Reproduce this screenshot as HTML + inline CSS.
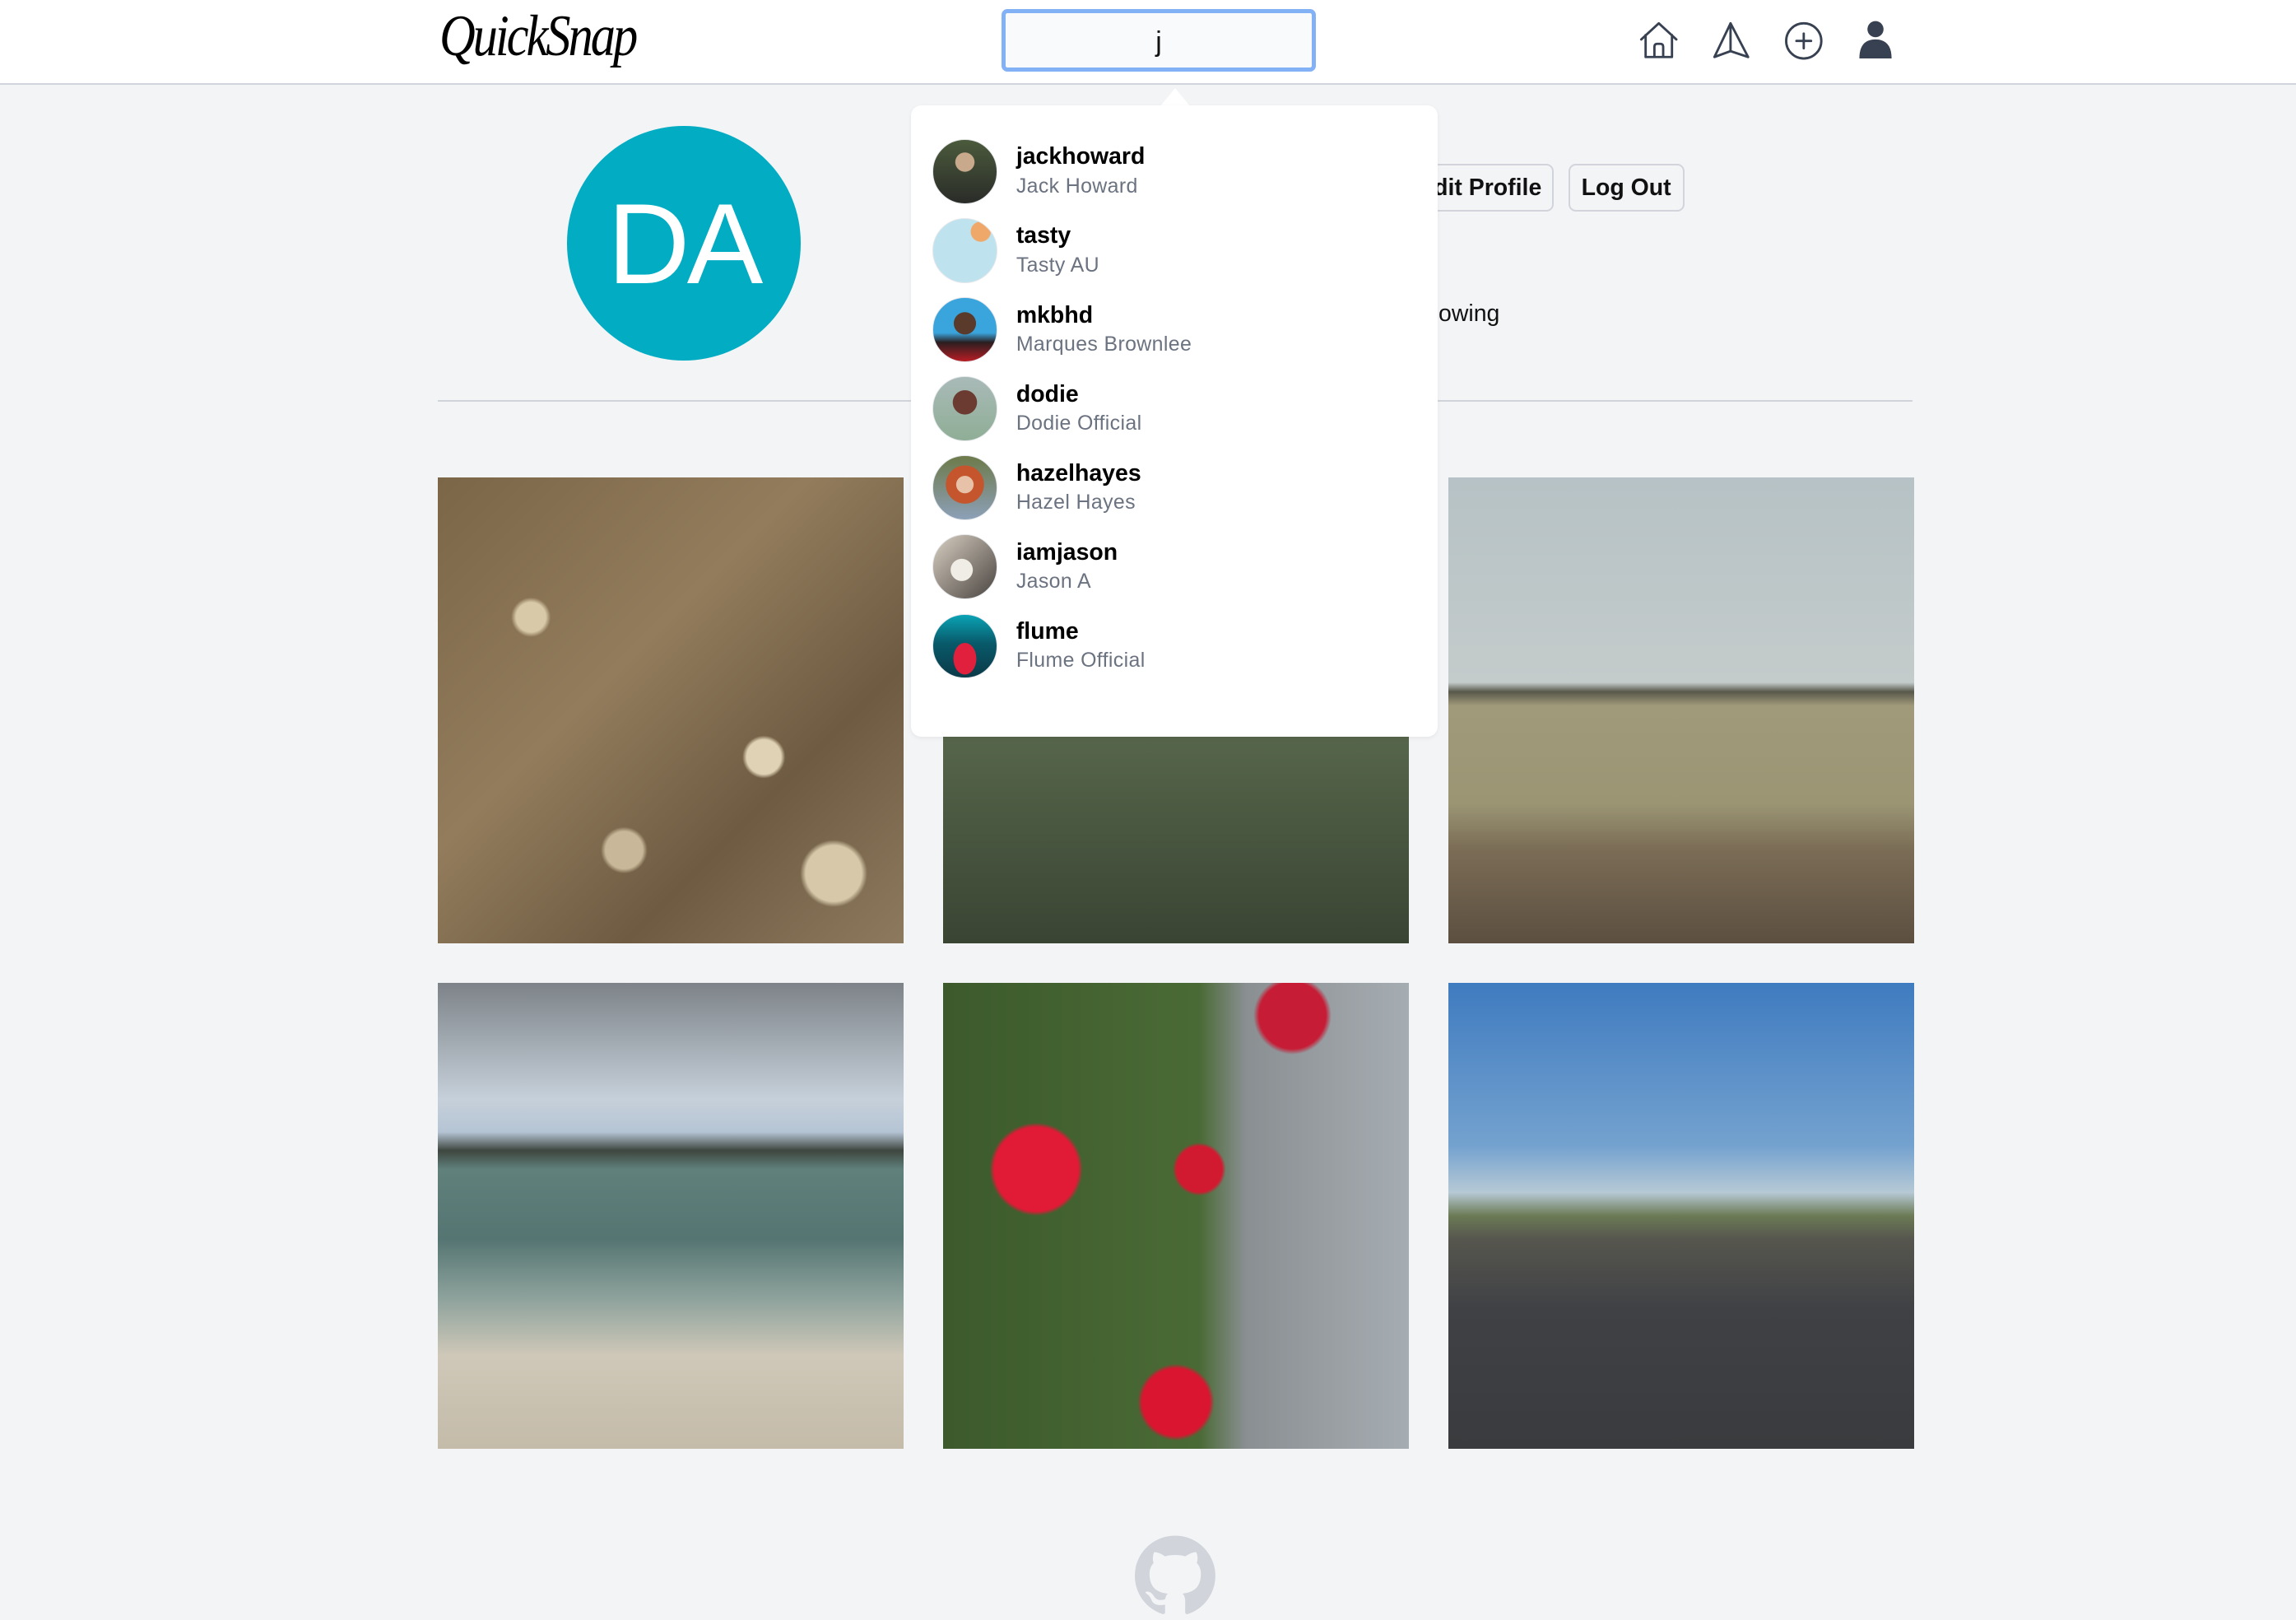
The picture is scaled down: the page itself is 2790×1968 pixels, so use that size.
<!DOCTYPE html>
<html><head><meta charset="utf-8">
<style>
html,body{margin:0;padding:0;}
body{width:2790px;height:1968px;overflow:hidden;background:#f3f4f6;}
#w{zoom:1.7793;width:1568px;height:1106px;position:relative;font-family:"Liberation Sans",sans-serif;background:#f3f4f6;overflow:hidden;}
.a{position:absolute;}
.hdr{left:0;top:0;width:1568px;height:57px;background:#fff;border-bottom:1.5px solid #d1d5db;}
.logo{left:300px;top:2px;font-family:"Liberation Serif",serif;font-style:italic;font-size:40px;letter-spacing:-2px;color:#000;transform:scaleX(0.85);transform-origin:left;}
.search{left:684px;top:6px;width:209px;height:37px;border:3px solid #82b2f5;border-radius:4px;background:#f9fafb;text-align:center;line-height:40px;font-size:19px;color:#111;}
.btn{top:112px;height:30px;border:1.5px solid #d1d5db;border-radius:5px;background:#f3f4f6;font-weight:bold;font-size:16px;line-height:31px;color:#111;text-align:center;}
.dd{left:622px;top:72px;width:360px;height:431px;background:#fff;border-radius:7px;box-shadow:0 1px 3px rgba(0,0,0,.06);}
.arr{left:792px;top:60px;width:0;height:0;border-left:11px solid transparent;border-right:11px solid transparent;border-bottom:13px solid #fff;}
.it{left:637px;height:44px;}
.av{position:absolute;left:0;top:0;width:43px;height:43px;border-radius:50%;border:1px solid #e5e7eb;}
.un{position:absolute;left:57px;top:3px;font-weight:bold;font-size:16px;color:#000;white-space:nowrap;}
.fn{position:absolute;left:57px;top:24px;font-size:14px;color:#6b7280;white-space:nowrap;letter-spacing:.2px;}
.ph{width:318px;height:318px;}
</style></head><body><div id="w">
<div class="a hdr"></div>
<div class="a logo">QuickSnap</div>
<div class="a search">j</div>
<svg class="a" style="left:1118px;top:13px" width="190" height="30" viewBox="0 0 190 30" fill="none" stroke="#374151" stroke-width="1.6" stroke-linecap="round" stroke-linejoin="round">
<path d="M3 14 L15 3 L27 14 M6 11 V26 H24 V11 M12 26 V19 Q12 17 14 17 H16 Q18 17 18 19 V26"/>
<path d="M64 3 L53 26 L64 22 L76 26 Z M64 3 V22"/>
<circle cx="114" cy="15" r="12"/><path d="M114 10 V20 M109 15 H119"/>
<circle cx="163" cy="7" r="5.5" fill="#374151" stroke="none"/>
<path d="M152 27 Q152 14 163 14 Q174 14 174 27 Z" fill="#374151" stroke="none"/>
</svg>
<div class="a" style="left:387px;top:86px;width:160px;height:160px;border-radius:50%;background:#02acc3;color:#fff;font-size:78px;text-align:center;line-height:162px;letter-spacing:-2px">DA</div>
<div class="a btn" style="left:960px;width:99px">Edit Profile</div>
<div class="a btn" style="left:1071px;width:77px">Log Out</div>
<div class="a" style="left:962px;top:205px;font-size:16px;color:#111">following</div>
<div class="a" style="left:299px;top:273px;width:1007px;height:1.5px;background:#d1d5db"></div>

<div class="a ph" style="left:299px;top:326px;background:radial-gradient(circle at 20% 30%,#d8c9a8 0 3%,transparent 4%),radial-gradient(circle at 70% 60%,#e0d3b5 0 4%,transparent 5%),radial-gradient(circle at 85% 85%,#d6c8a9 0 5%,transparent 6%),radial-gradient(circle at 40% 80%,#c8b899 0 4%,transparent 5%),linear-gradient(135deg,#7b6648,#927c5c 40%,#6e5b42 70%,#8d7a5e)"></div>
<div class="a ph" style="left:644px;top:326px;background:linear-gradient(180deg,#8a9389 0%,#56664b 55%,#3a4433 100%)"></div>
<div class="a ph" style="left:989px;top:326px;background:linear-gradient(180deg,#b6c2c5 0%,#c4cbcb 44%,#58584a 46%,#a09a7b 49%,#9b9574 70%,#7a6c55 80%,#5c4f40 100%)"></div>
<div class="a ph" style="left:299px;top:671px;background:linear-gradient(180deg,#7d8388 0%,#c6d0da 25%,#b5c4d4 32%,#3e463f 36%,#60807c 40%,#557572 55%,#8fa39d 68%,#cfc8b8 80%,#c4bba9 100%)"></div>
<div class="a ph" style="left:644px;top:671px;background:radial-gradient(circle at 20% 40%,#e11a36 0 9%,transparent 10%),radial-gradient(circle at 55% 40%,#d11a30 0 6%,transparent 7%),radial-gradient(circle at 50% 90%,#d9152f 0 7%,transparent 8%),radial-gradient(circle at 75% 7%,#c61c35 0 6%,transparent 7%),linear-gradient(90deg,#3c5a2c 0%,#4a6a35 55%,#8a8f92 65%,#a6adb2 100%)"></div>
<div class="a ph" style="left:989px;top:671px;background:linear-gradient(180deg,#3f7bc0 0%,#74a2cf 35%,#b6c9d5 45%,#6b7a55 50%,#56564e 55%,#3f4145 70%,#3a3b3e 100%)"></div>

<div class="a arr"></div>
<div class="a dd"></div>
<div class="a it" style="top:95px"><div class="av" style="background:radial-gradient(circle at 50% 35%,#c9a98c 0 18%,transparent 19%),linear-gradient(180deg,#4b5a3c,#2a2c28)"></div><div class="un">jackhoward</div><div class="fn">Jack Howard</div></div>
<div class="a it" style="top:149px"><div class="av" style="background:radial-gradient(circle at 75% 20%,#f0a86a 0 14%,transparent 15%),#bfe3ee"></div><div class="un">tasty</div><div class="fn">Tasty AU</div></div>
<div class="a it" style="top:203px"><div class="av" style="background:radial-gradient(circle at 50% 40%,#5a3a2a 0 22%,transparent 23%),linear-gradient(180deg,#3aa5dc 0%,#3aa5dc 55%,#2a1e20 70%,#b81d24 100%)"></div><div class="un">mkbhd</div><div class="fn">Marques Brownlee</div></div>
<div class="a it" style="top:257px"><div class="av" style="background:radial-gradient(circle at 50% 40%,#6b3a30 0 24%,transparent 25%),linear-gradient(180deg,#a9bab8,#8fae96)"></div><div class="un">dodie</div><div class="fn">Dodie Official</div></div>
<div class="a it" style="top:311px"><div class="av" style="background:radial-gradient(circle at 50% 45%,#e8c2a8 0 18%,#c4552c 19% 40%,transparent 41%),linear-gradient(180deg,#6d7a4a,#8ca0b8)"></div><div class="un">hazelhayes</div><div class="fn">Hazel Hayes</div></div>
<div class="a it" style="top:365px"><div class="av" style="background:radial-gradient(circle at 45% 55%,#f0ece6 0 22%,transparent 23%),linear-gradient(135deg,#d8cfc2,#4a4440)"></div><div class="un">iamjason</div><div class="fn">Jason A</div></div>
<div class="a it" style="top:419px"><div class="av" style="background:radial-gradient(ellipse at 50% 70%,#e0203c 0 25%,transparent 26%),linear-gradient(180deg,#0aa3b5,#085a6a 45%,#0b3a48)"></div><div class="un">flume</div><div class="fn">Flume Official</div></div>

<svg class="a" style="left:775px;top:1046px" width="55" height="60" viewBox="0 0 16 16"><path fill="#d1d5db" d="M8 0C3.580 0 0 3.58 0 8c0 3.54 2.29 6.53 5.47 7.59.4.07.55-.17.55-.38 0-.19-.01-.82-.01-1.49-2.01.37-2.530-.49-2.69-.94-.09-.23-.48-.94-.82-1.13-.28-.15-.68-.52-.01-.53.63-.01 1.08.58 1.23.82.72 1.21 1.87.87 2.33.66.07-.52.28-.87.51-1.07-1.78-.2-3.64-.89-3.64-3.95 0-.87.31-1.59.82-2.15-.08-.2-.36-1.02.08-2.12 0 0 .67-.21 2.2.82.64-.18 1.32-.27 2-.27.68 0 1.36.09 2 .27 1.53-1.04 2.2-.82 2.2-.82.44 1.1.16 1.92.08 2.12.51.56.82 1.27.82 2.15 0 3.07-1.87 3.75-3.65 3.95.29.25.54.73.54 1.48 0 1.07-.01 1.93-.01 2.2 0 .21.15.46.55.38A8.013 8.013 0 0016 8c0-4.42-3.58-8-8-8z"/></svg>
</div></body></html>
